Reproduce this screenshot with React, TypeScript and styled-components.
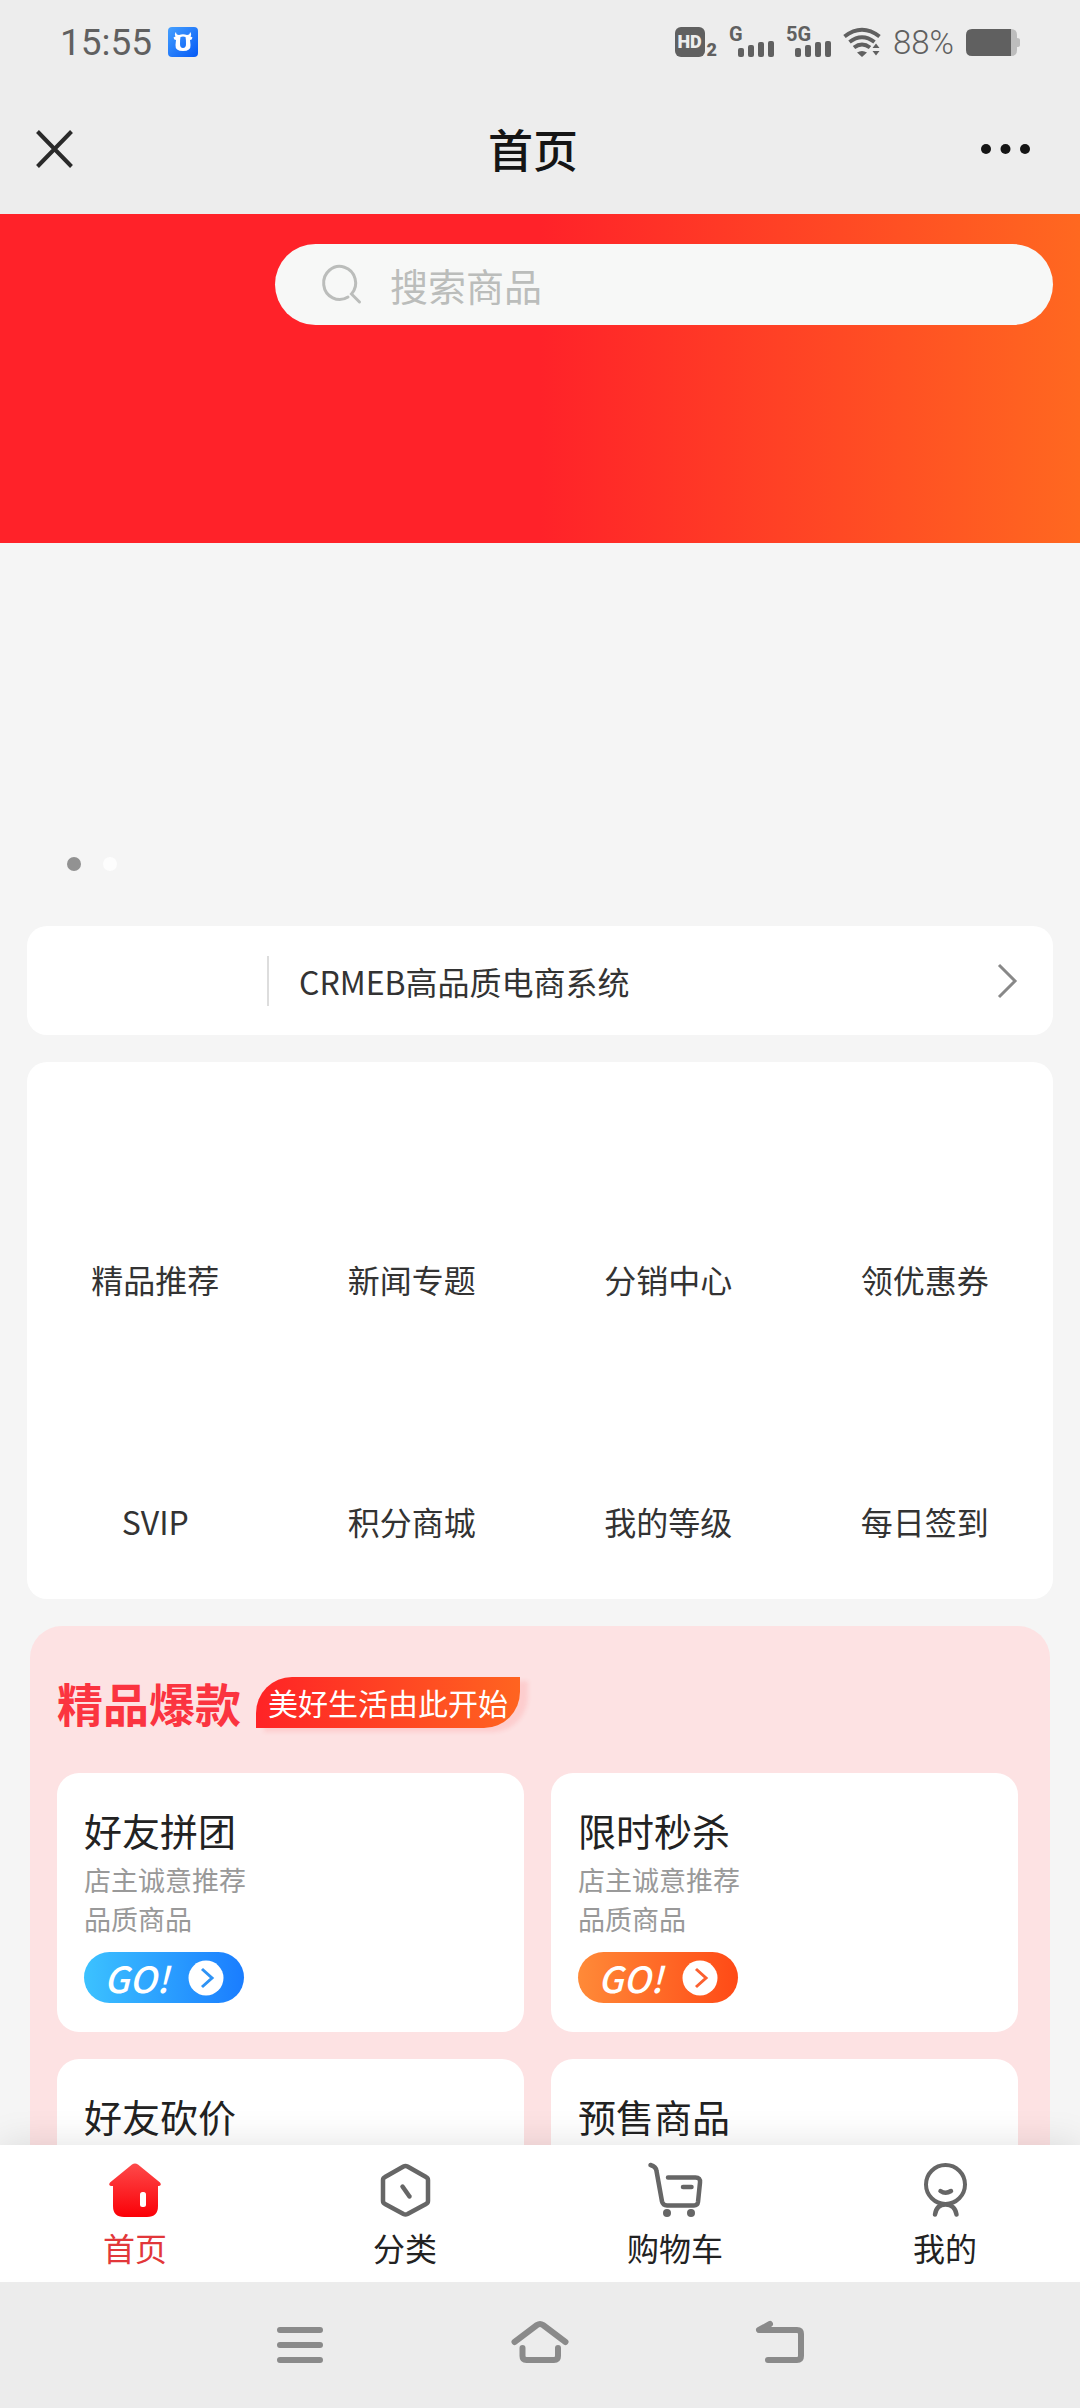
import React from "react";
import styled, { createGlobalStyle } from "styled-components";

const GlobalStyle = createGlobalStyle`
  *, *::before, *::after { box-sizing: border-box; }
  body {
    margin: 0;
    background: #f5f5f5;
    font-family: "Noto Sans CJK SC", "Noto Sans", sans-serif;
    color: #282828;
  }
  button, input { font: inherit; color: inherit; }
  button { border: 0; padding: 0; background: none; cursor: pointer; }
  a { color: inherit; text-decoration: none; }
  h1, h2, h3, p, ul { margin: 0; padding: 0; font-weight: 400; }
  ul { list-style: none; }
  svg { display: block; overflow: visible; flex: none; }
`;

const Screen = styled.div`
  display: flex;
  flex-direction: column;
  height: 100vh;
  overflow: hidden;
`;

/* ---------- status bar and title bar ---------- */

const TopBars = styled.header`
  flex: none;
  background: #ededed;
`;

const StatusBar = styled.div`
  display: flex;
  align-items: center;
  justify-content: space-between;
  height: 84px;
  padding: 0 60px;
  font-family: Roboto, "Noto Sans", sans-serif;
  color: #606060;
`;

const StatusGroup = styled.div<{ $gap: number }>`
  display: flex;
  align-items: center;
  gap: ${(p) => p.$gap}px;
`;

const Clock = styled.span`
  padding-top: 2px;
  font-size: 37px;
  line-height: 44px;
`;

const HdMark = styled.span`
  display: flex;
  align-items: flex-end;
  gap: 2px;
  font-size: 18px;
  font-weight: 900;
  line-height: 14px;
`;

const HdBox = styled.span`
  display: grid;
  place-items: center;
  width: 30px;
  height: 30px;
  border-radius: 6px;
  background: #606060;
  color: #ededed;
`;

const SignalBox = styled.span`
  display: grid;
  height: 30px;

  > * { grid-area: 1 / 1; }
`;

const SignalLabel = styled.span`
  font-size: 20px;
  font-weight: 700;
  line-height: 15px;
`;

const SignalBars = styled.span`
  display: flex;
  align-items: flex-end;
  gap: 4px;
  padding-left: 9px;
`;

const SignalBar = styled.span<{ $level: number }>`
  width: 6px;
  height: ${(p) => 6 + p.$level * 3 - (p.$level > 3 ? 2 : 0)}px;
  border-radius: 2px;
  background: #606060;
`;

const BatteryText = styled.span`
  padding-top: 2px;
  font-size: 33px;
  font-weight: 300;
  line-height: 36px;
`;

const TitleBar = styled.div`
  display: grid;
  grid-template-columns: 1fr auto 1fr;
  align-items: center;
  height: 130px;
  padding: 0 50px 0 36px;
`;

const PageTitle = styled.h1`
  font-size: 45px;
  font-weight: 500;
  line-height: 64px;
  color: #151515;
`;

const BarButton = styled.button<{ $end?: boolean }>`
  justify-self: ${(p) => (p.$end ? "end" : "start")};
`;

/* ---------- scrolling page ---------- */

const Page = styled.main`
  flex: 1;
  min-height: 0;
  overflow: hidden auto;
  scrollbar-width: none;
`;

const Hero = styled.div`
  display: flex;
  align-items: flex-start;
  height: 329px;
  padding: 30px 27px;
  background: linear-gradient(90deg, #ff2229 50%, #ff6820 100%);
`;

const LogoSlot = styled.div`
  flex: none;
  width: 248px;
`;

const SearchBox = styled.form`
  display: flex;
  flex: 1;
  align-items: center;
  gap: 28px;
  min-width: 0;
  height: 81px;
  padding: 0 48px;
  border-radius: 41px;
  background: #f7f8f7;
`;

const SearchInput = styled.input`
  flex: 1;
  min-width: 0;
  border: 0;
  padding: 0;
  outline: 0;
  background: none;
  font-size: 38px;
  line-height: 54px;

  &::placeholder { color: #bbbdbb; opacity: 1; }
`;

const Carousel = styled.section`
  display: flex;
  align-items: flex-end;
  gap: 22px;
  height: 383px;
  padding: 0 67px 55px;
`;

const CarouselDot = styled.button<{ $active?: boolean }>`
  width: 14px;
  height: 14px;
  border-radius: 50%;
  background: ${(p) => (p.$active ? "#929292" : "#fdfdfd")};
`;

const Card = styled.section`
  margin: 0 27px 27px;
  border-radius: 20px;
  background: #fff;
`;

const NoticeLink = styled.a`
  display: flex;
  align-items: center;
  height: 109px;
  padding: 0 36px 0 240px;
  font-size: 32px;
  line-height: 50px;
  color: #333;
`;

const NoticeText = styled.span`
  flex: 1;
  padding-left: 30px;
  border-left: 2px solid #ddd;
`;

const MenuGrid = styled.ul`
  display: grid;
  grid-template-columns: repeat(4, 1fr);
  padding: 0 0 53px;
`;

const MenuLink = styled.a`
  display: flex;
  flex-direction: column;
  align-items: center;
  justify-content: flex-end;
  height: 242px;
  font-size: 32px;
  line-height: 50px;
  color: #333;
`;

const Featured = styled.section`
  margin: 0 30px;
  padding: 51px 32px 27px 27px;
  border-radius: 32px;
  background: #fde2e3;
`;

const FeaturedHead = styled.div`
  display: flex;
  align-items: center;
  gap: 15px;
  margin-bottom: 45px;
`;

const FeaturedTitle = styled.h2`
  font-size: 46px;
  font-weight: 700;
  line-height: 51px;
  color: #fb3440;
`;

const Slogan = styled.span`
  padding: 0 12px;
  border-radius: 36px 0 36px 0;
  background: linear-gradient(90deg, #ff2326, #ff6420);
  box-shadow: 8px 4px 4px rgba(255, 60, 60, 0.12);
  font-size: 30px;
  line-height: 51px;
  color: #fff;
`;

const PromoGrid = styled.div`
  display: grid;
  grid-template-columns: 1fr 1fr;
  grid-auto-rows: 1fr;
  gap: 27px;
`;

const PromoCard = styled.article`
  padding: 32px 27px 29px;
  border-radius: 22px;
  background: #fff;
`;

const PromoTitle = styled.h3`
  font-size: 38px;
  line-height: 50px;
  color: #222;
`;

const PromoText = styled.p`
  margin: 5px 0 14px;
  font-size: 27px;
  line-height: 39px;
  color: #999;
`;

const GoButton = styled.button<{ $from: string; $to: string }>`
  display: flex;
  align-items: center;
  justify-content: space-between;
  width: 160px;
  height: 51px;
  padding: 0 20px;
  border-radius: 26px;
  background: linear-gradient(90deg, ${(p) => p.$from}, ${(p) => p.$to});
  font-size: 36px;
  font-style: italic;
  font-weight: 500;
  line-height: 51px;
  color: #fff;
`;

const GoLabel = styled.span`
  flex: none;
`;

/* ---------- tab bar and system navigation ---------- */

const TabBar = styled.nav`
  z-index: 1;
  display: flex;
  flex: none;
  height: 137px;
  background: #fff;
  box-shadow: 0 0 36px rgba(0, 0, 0, 0.12);
`;

const TabLink = styled.a<{ $active?: boolean }>`
  display: flex;
  flex: 1;
  flex-direction: column;
  align-items: center;
  gap: 8px;
  padding-top: 18px;
  font-size: 32px;
  line-height: 44px;
  color: ${(p) => (p.$active ? "#e2373a" : "#222")};
`;

const SystemNav = styled.nav`
  z-index: 1;
  display: flex;
  flex: none;
  align-items: center;
  justify-content: center;
  gap: 180px;
  height: 126px;
  background: #ececec;
`;

/* ---------- drawings ---------- */

const AppBadge = () => (
  <svg width="30" height="30" viewBox="0 0 30 30" aria-hidden="true">
    <defs>
      <linearGradient id="appBlue" x1="0" y1="0" x2="1" y2="1">
        <stop offset="0" stopColor="#45a0ff" />
        <stop offset="1" stopColor="#0559f5" />
      </linearGradient>
    </defs>
    <rect width="30" height="30" rx="4" fill="url(#appBlue)" />
    <path
      fill="#fff"
      fillRule="evenodd"
      d="M8 5 Q8 8 11 8 Q15 6.500 19 8 Q22 8 22 5 Q24 7 22.500 9.500 L24.500 10.500 Q24 13 22 13 L22.500 18 Q23 24 15 24 Q7 24 7.500 18 L8 13 Q6 13 5.500 10.500 L7.500 9.500 Q6 7 8 5 Z M12.500 10 Q12 12 12 17 Q12 21 15 21 Q18 21 18 17 Q18 12 17.500 10 Q15 9 12.500 10 Z"
    />
  </svg>
);

const WifiIcon = () => (
  <svg width="38" height="30" viewBox="0 0 38 30" fill="none" stroke="#606060" strokeWidth="4" aria-hidden="true">
    <path d="M1.500 9.500 Q19 -4 36.500 9.500" />
    <path d="M6.500 15 Q19 5.500 31.500 15" />
    <path d="M11 20.500 Q19 14.500 27 20.500" />
    <path d="M14 25.500 Q19 22.500 24 25.500 L19 30 Z" fill="#606060" stroke="none" />
    <path d="M29.500 21 L33 16.500 L36.500 21 Z M29.500 24 L33 28.500 L36.500 24 Z" fill="#606060" stroke="none" />
  </svg>
);

const BatteryIcon = () => (
  <svg width="54" height="27" viewBox="0 0 54 27" aria-hidden="true">
    <path d="M40 0 H45 Q51 0 51 6 V9 Q54 9 54 11 V16 Q54 18 51 18 V21 Q51 27 45 27 H40 Z" fill="#bdbdbd" />
    <path d="M6 0 H45 V27 H6 Q0 27 0 21 V6 Q0 0 6 0 Z" fill="#606060" />
  </svg>
);

const Signal = ({ label }: { label: string }) => (
  <SignalBox>
    <SignalLabel>{label}</SignalLabel>
    <SignalBars>
      {[1, 2, 3, 4].map((n) => (
        <SignalBar key={n} $level={n} />
      ))}
    </SignalBars>
  </SignalBox>
);

const CloseIcon = () => (
  <svg width="37" height="38" viewBox="0 0 37 38" stroke="#2a2a2a" strokeWidth="4" aria-hidden="true">
    <path d="M1.500 1.500 L35.500 36.500 M35.500 1.500 L1.500 36.500" />
  </svg>
);

const MoreIcon = () => (
  <svg width="49" height="12" viewBox="0 0 49 12" fill="#151515" aria-hidden="true">
    <circle cx="5" cy="6" r="5" />
    <circle cx="24.500" cy="6" r="5" />
    <circle cx="44" cy="6" r="5" />
  </svg>
);

const SearchIcon = () => (
  <svg width="39" height="39" viewBox="0 0 39 39" fill="none" stroke="#bbbdbb" strokeWidth="3" strokeLinecap="round" aria-hidden="true">
    <path d="M25 32 A16 16.500 0 1 1 28.500 29 L36.500 37" />
  </svg>
);

const ChevronIcon = () => (
  <svg width="19" height="34" viewBox="0 0 19 34" fill="none" stroke="#888" strokeWidth="3" aria-hidden="true">
    <path d="M1 1 L17 17 L1 33" />
  </svg>
);

const GoArrow = ({ color }: { color: string }) => (
  <svg width="36" height="36" viewBox="0 0 36 36" aria-hidden="true">
    <circle cx="18" cy="18" r="17.500" fill="#fff" />
    <path d="M14 9 L24 18 L14 27" fill="none" stroke={color} strokeWidth="3" />
  </svg>
);

const HomeIcon = () => (
  <svg width="54" height="54" viewBox="0 0 54 54" aria-hidden="true">
    <defs>
      <linearGradient id="homeRed" x1="0" y1="0" x2="0" y2="1">
        <stop offset="0" stopColor="#fd4a4a" />
        <stop offset="1" stopColor="#fb0007" />
      </linearGradient>
    </defs>
    <path
      fill="url(#homeRed)"
      d="M24 1.500 Q27 -0.500 30 1.500 L52 19.500 Q54 22 51 23 H50 V43 Q50 54 39 54 H16 Q5 54 5 43 V23 H3 Q0 22 2 19.500 Z"
    />
    <rect x="32" y="29" width="6" height="15" rx="2.500" fill="#fff" />
  </svg>
);

const TabDrawing = ({ children }: { children: React.ReactNode }) => (
  <svg
    width="54"
    height="54"
    viewBox="0 0 54 54"
    fill="none"
    stroke="#666"
    strokeWidth="4.500"
    strokeLinecap="round"
    strokeLinejoin="round"
    aria-hidden="true"
  >
    {children}
  </svg>
);

const CategoryIcon = () => (
  <TabDrawing>
    <path d="M25.500 3.500 Q27.500 2.500 29.500 3.500 L48 14 Q50 15 50 17 V38 Q50 40 48 41 L29.500 51 Q27.500 52 25.500 51 L7 41 Q5 40 5 38 V17 Q5 15 7 14 Z" />
    <path d="M24.500 23.500 L31.500 33.500" />
  </TabDrawing>
);

const CartIcon = () => (
  <TabDrawing>
    <path d="M2.500 2 Q8 3.500 8.500 8 L14 38.500 Q15 42.500 19 42.500 H46 Q49.500 42.500 50 39 L52 19.500 Q52.500 14.500 47.500 14.500 H20" />
    <path d="M35 24 H43.500" />
    <circle cx="19" cy="50" r="4" fill="#666" stroke="none" />
    <circle cx="43" cy="50" r="4" fill="#666" stroke="none" />
  </TabDrawing>
);

const ProfileIcon = () => (
  <TabDrawing>
    <circle cx="27.500" cy="21.500" r="19.500" strokeWidth="4" />
    <path d="M22.500 28 Q27.500 31.500 33 28" />
    <path d="M17 51.500 C18 45 22 41.500 27.500 41.500 C33 41.500 37.500 45 38.500 51.500" />
  </TabDrawing>
);

const SystemIcon = ({ d }: { d: string }) => (
  <svg width="60" height="60" viewBox="0 0 60 60" fill="none" stroke="#8a8a8a" strokeWidth="6" strokeLinecap="round" strokeLinejoin="round" aria-hidden="true">
    <path d={d} />
  </svg>
);

/* ---------- content ---------- */

const menuItems = ["精品推荐", "新闻专题", "分销中心", "领优惠券", "SVIP", "积分商城", "我的等级", "每日签到"];

type Promo = {
  title: string;
  lines?: [string, string];
  tint?: { from: string; to: string; arrow: string };
};

const promos: Promo[] = [
  {
    title: "好友拼团",
    lines: ["店主诚意推荐", "品质商品"],
    tint: { from: "#3cc2ff", to: "#1a7dff", arrow: "#2e93f5" },
  },
  {
    title: "限时秒杀",
    lines: ["店主诚意推荐", "品质商品"],
    tint: { from: "#ff8a38", to: "#ff4a16", arrow: "#fb6030" },
  },
  { title: "好友砍价" },
  { title: "预售商品" },
];

const tabs = [
  { label: "首页", icon: <HomeIcon />, active: true },
  { label: "分类", icon: <CategoryIcon /> },
  { label: "购物车", icon: <CartIcon /> },
  { label: "我的", icon: <ProfileIcon /> },
];

const systemButtons = [
  { name: "最近任务", d: "M10 15 H50 M10 30 H50 M10 45 H50" },
  { name: "主屏幕", d: "M4.500 27 L27 10 Q30 8 33 10 L55.500 27 M12.500 33 V41 Q12.500 45 16.500 45 H44 Q48 45 48 41 V33" },
  { name: "返回", d: "M20 9 L9 15 H47 Q51 15 51 19 V41 Q51 45 47 45 H18" },
];

export default function App() {
  return (
    <Screen>
      <GlobalStyle />
      <TopBars>
        <StatusBar>
          <StatusGroup $gap={16}>
            <Clock>15:55</Clock>
            <AppBadge />
          </StatusGroup>
          <StatusGroup $gap={12}>
            <HdMark>
              <HdBox>HD</HdBox>2
            </HdMark>
            <Signal label="G" />
            <Signal label="5G" />
            <WifiIcon />
            <BatteryText>88%</BatteryText>
            <BatteryIcon />
          </StatusGroup>
        </StatusBar>
        <TitleBar>
          <BarButton type="button" aria-label="关闭">
            <CloseIcon />
          </BarButton>
          <PageTitle>首页</PageTitle>
          <BarButton type="button" aria-label="更多" $end>
            <MoreIcon />
          </BarButton>
        </TitleBar>
      </TopBars>

      <Page>
        <Hero>
          <LogoSlot />
          <SearchBox role="search" onSubmit={(e) => e.preventDefault()}>
            <label htmlFor="search" aria-label="搜索商品">
              <SearchIcon />
            </label>
            <SearchInput id="search" type="text" placeholder="搜索商品" />
          </SearchBox>
        </Hero>

        <Carousel>
          <CarouselDot type="button" aria-label="1" $active />
          <CarouselDot type="button" aria-label="2" />
        </Carousel>

        <Card>
          <NoticeLink href="#notice">
            <NoticeText>CRMEB高品质电商系统</NoticeText>
            <ChevronIcon />
          </NoticeLink>
        </Card>

        <Card>
          <MenuGrid>
            {menuItems.map((name) => (
              <li key={name}>
                <MenuLink href="#menu">{name}</MenuLink>
              </li>
            ))}
          </MenuGrid>
        </Card>

        <Featured>
          <FeaturedHead>
            <FeaturedTitle>精品爆款</FeaturedTitle>
            <Slogan>美好生活由此开始</Slogan>
          </FeaturedHead>
          <PromoGrid>
            {promos.map((p) => (
              <PromoCard key={p.title}>
                <PromoTitle>{p.title}</PromoTitle>
                {p.lines && (
                  <PromoText>
                    {p.lines[0]}
                    <br />
                    {p.lines[1]}
                  </PromoText>
                )}
                {p.tint && (
                  <GoButton type="button" $from={p.tint.from} $to={p.tint.to}>
                    <GoLabel>GO!</GoLabel>
                    <GoArrow color={p.tint.arrow} />
                  </GoButton>
                )}
              </PromoCard>
            ))}
          </PromoGrid>
        </Featured>
      </Page>

      <TabBar>
        {tabs.map((t) => (
          <TabLink key={t.label} href="#tab" $active={t.active}>
            {t.icon}
            {t.label}
          </TabLink>
        ))}
      </TabBar>

      <SystemNav>
        {systemButtons.map((b) => (
          <button key={b.name} type="button" aria-label={b.name}>
            <SystemIcon d={b.d} />
          </button>
        ))}
      </SystemNav>
    </Screen>
  );
}
